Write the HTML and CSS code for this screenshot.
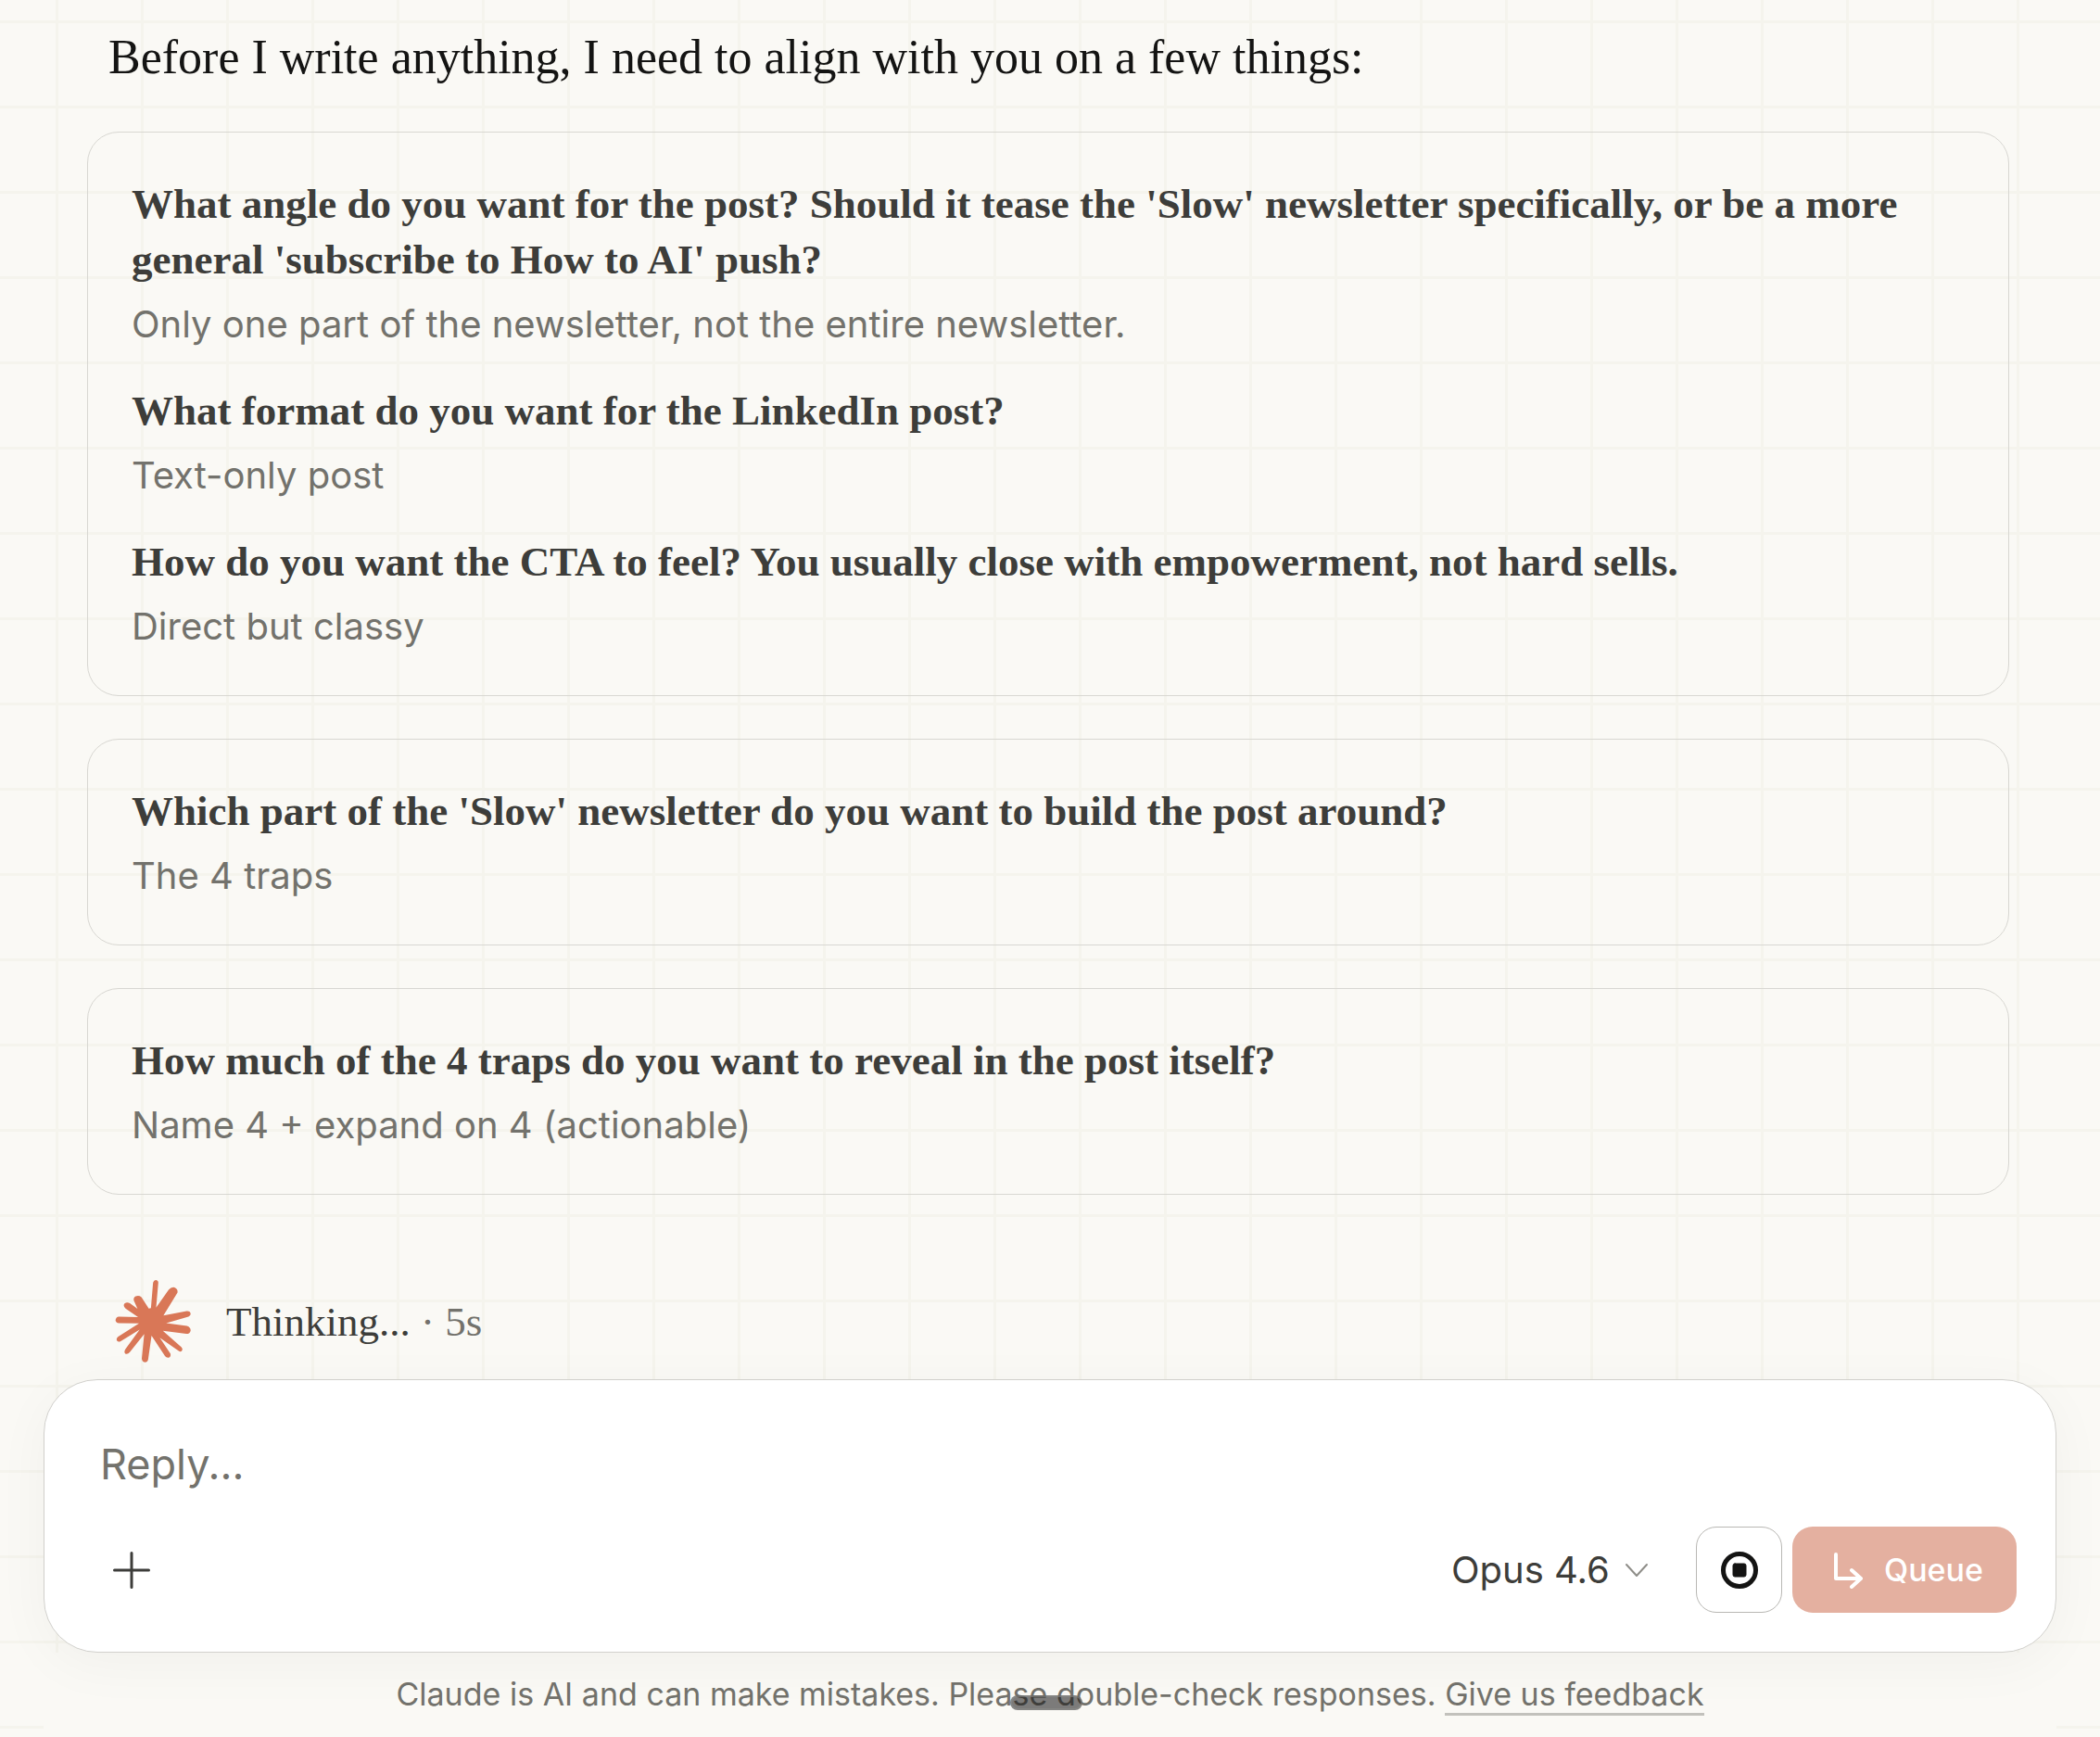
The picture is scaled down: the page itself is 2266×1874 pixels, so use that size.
FILE: index.html
```
<!DOCTYPE html>
<html lang="en">
<head>
  <meta charset="UTF-8" />
  <meta name="viewport" content="width=device-width, initial-scale=1" />
  <title>Chat</title>
  <link rel="stylesheet" href="styles.css">
</head>
<body>
  <main class="chat">
    <p class="intro">Before I write anything, I need to align with you on a few things:</p>

    <section class="card">
      <div class="qa">
        <h2 class="question">What angle do you want for the post? Should it tease the 'Slow' newsletter specifically, or be a more general 'subscribe to How to AI' push?</h2>
        <p class="answer">Only one part of the newsletter, not the entire newsletter.</p>
      </div>
      <div class="qa">
        <h2 class="question">What format do you want for the LinkedIn post?</h2>
        <p class="answer">Text-only post</p>
      </div>
      <div class="qa">
        <h2 class="question">How do you want the CTA to feel? You usually close with empowerment, not hard sells.</h2>
        <p class="answer">Direct but classy</p>
      </div>
    </section>

    <section class="card">
      <div class="qa">
        <h2 class="question">Which part of the 'Slow' newsletter do you want to build the post around?</h2>
        <p class="answer">The 4 traps</p>
      </div>
    </section>

    <section class="card">
      <div class="qa">
        <h2 class="question">How much of the 4 traps do you want to reveal in the post itself?</h2>
        <p class="answer">Name 4 + expand on 4 (actionable)</p>
      </div>
    </section>

    <div class="thinking">
      <svg class="spark" viewBox="71 120 250 276" aria-hidden="true">
        <path d="M188 215L195 131Q198 122 205 123Q213 125 212 133L205 213L246 155Q254 145 265 147Q277 152 275 164L229 239L305 225Q316 224 318 232Q319 239 311 243L238 264L306 273Q318 277 318 288Q316 299 304 299L227 289L288 343Q294 349 289 355Q285 359 279 355L217 312L252 364Q254 374 246 377Q238 378 234 372L190 305L179 382Q177 392 168 392Q159 391 158 380L166 300L119 359Q112 367 104 364Q99 359 104 350L151 285L88 324Q80 327 76 320Q74 314 80 309L149 265L83 264Q73 263 72 254Q74 244 83 243L146 244L105 216Q96 207 101 200Q110 193 119 199L144 217L132 190Q130 180 138 176Q149 172 157 179L181 216Z"/>
      </svg>
      <p class="status">Thinking... <span class="elapsed">· 5s</span></p>
    </div>
  </main>

  <footer class="dock">
    <form class="composer">
      <input class="reply" type="text" placeholder="Reply..." aria-label="Reply">
      <div class="toolbar">
        <button class="add" type="button" aria-label="Add">
          <svg width="40" height="40" viewBox="0 0 40 40"><path d="M20 1.500V38.500M1.500 20H38.500"/></svg>
        </button>
        <label class="model">
          <select class="model-select" aria-label="Model">
            <option>Opus 4.6</option>
          </select>
          <svg width="26" height="16" viewBox="0 0 26 16"><path d="M2 2L13 14L24 2"/></svg>
        </label>
        <button class="stop" type="button" aria-label="Stop">
          <svg width="40" height="40" viewBox="0 0 40 40"><circle cx="20" cy="20" r="17.500"/><rect x="13" y="13" width="14" height="14" rx="2"/></svg>
        </button>
        <button class="queue" type="button">
          <svg width="32" height="40" viewBox="0 0 32 40"><path d="M3 3V29H30M20 20L30 29L20 38"/></svg>
          Queue
        </button>
      </div>
    </form>
    <p class="notice">Claude is AI and can make mistakes. Please double-check responses. <a class="feedback" href="#">Give us feedback</a><span class="handle"></span></p>
  </footer>
</body>
</html>
```
FILE: styles.css
```
* {
  box-sizing: border-box;
}

body {
  margin: 0;
  background-color: #faf9f5;
  background-image:
    linear-gradient(to right, #f5f4ed 3px, transparent 3px),
    linear-gradient(to bottom, #f5f4ed 3px, transparent 3px);
  background-size: 92px 92px;
  background-position: 60px 22px;
  font-family: Inter, "Liberation Sans", sans-serif;
  color: #3d3d3a;
  overflow-x: hidden;
}

h2, p {
  margin: 0;
}

button, input, select {
  font-family: inherit;
  color: inherit;
  border: none;
  padding: 0;
  background: none;
}

svg {
  fill: none;
  stroke: currentColor;
  stroke-linecap: round;
  stroke-linejoin: round;
}

.chat {
  display: flex;
  flex-direction: column;
  gap: 46px;
  padding: 28px 98px 17px 94px;
}

.intro {
  padding-left: 23px;
  font-family: "Liberation Serif", serif;
  font-size: 52px;
  line-height: 68px;
  color: #141413;
}

.card {
  display: flex;
  flex-direction: column;
  gap: 37px;
  padding: 47px 47px 48px;
  border: 1px solid #d8d7d2;
  border-radius: 34px;
}

.question {
  font-family: "Liberation Serif", serif;
  font-size: 45px;
  font-weight: bold;
  line-height: 60px;
}

.answer {
  margin-top: 14px;
  font-size: 40px;
  line-height: 52px;
  color: #73726c;
}

.thinking {
  display: flex;
  align-items: center;
  gap: 37px;
  margin-top: 45px;
  padding-left: 30px;
}

.spark {
  width: 83px;
  height: 91px;
  fill: #d97757;
  stroke: none;
}

.status {
  font-family: "Liberation Serif", serif;
  font-size: 45px;
  line-height: 60px;
}

.elapsed {
  color: #73726c;
}

/* bottom area */
.dock {
  padding: 0 47px;
}

.composer {
  position: relative;
  z-index: 1;
  padding: 58px 42px 42px 47px;
  background: #fff;
  border: 1px solid #d1d0cc;
  border-radius: 58px;
  box-shadow: 0 12px 60px rgba(0, 0, 0, 0.04);
}

.reply {
  display: block;
  width: 100%;
  height: 64px;
  padding-left: 13px;
  font-size: 45px;
  outline: none;
}

.reply::placeholder {
  color: #73726c;
  opacity: 1;
}

.toolbar {
  display: flex;
  align-items: center;
  margin-top: 36px;
}

.add, .stop {
  display: flex;
  align-items: center;
  justify-content: center;
  width: 93px;
  height: 93px;
  stroke-width: 3px;
}

.model {
  display: flex;
  align-items: center;
  gap: 16px;
  margin-left: auto;
  margin-right: 51px;
}

.model-select {
  appearance: none;
  font-size: 40px;
}

.model svg {
  color: #8f8e89;
  stroke-width: 2px;
}

.stop {
  border: 1px solid #b9b8b4;
  border-radius: 22px;
  color: #141413;
  stroke-width: 5px;
}

.stop rect {
  fill: currentColor;
  stroke-width: 1px;
}

.queue {
  display: flex;
  align-items: center;
  gap: 23px;
  height: 93px;
  margin-left: 11px;
  padding: 0 36px 0 44px;
  border-radius: 22px;
  background: #e4b0a0;
  color: #fff;
  font-size: 34px;
  font-weight: 500;
  stroke-width: 4px;
}

.notice {
  position: relative;
  padding: 20px 0 24px;
  background: #faf9f5;
  font-size: 34px;
  line-height: 50px;
  text-align: center;
  color: #73726c;
}

.feedback {
  color: inherit;
  text-decoration: none;
  border-bottom: 3px solid #c2c1bc;
}

.handle {
  position: absolute;
  left: 48%;
  top: 46px;
  width: 78px;
  height: 16px;
  border: 2px solid rgba(140, 140, 138, 0.6);
  border-radius: 8px;
  background: rgba(20, 20, 20, 0.55);
}
```
